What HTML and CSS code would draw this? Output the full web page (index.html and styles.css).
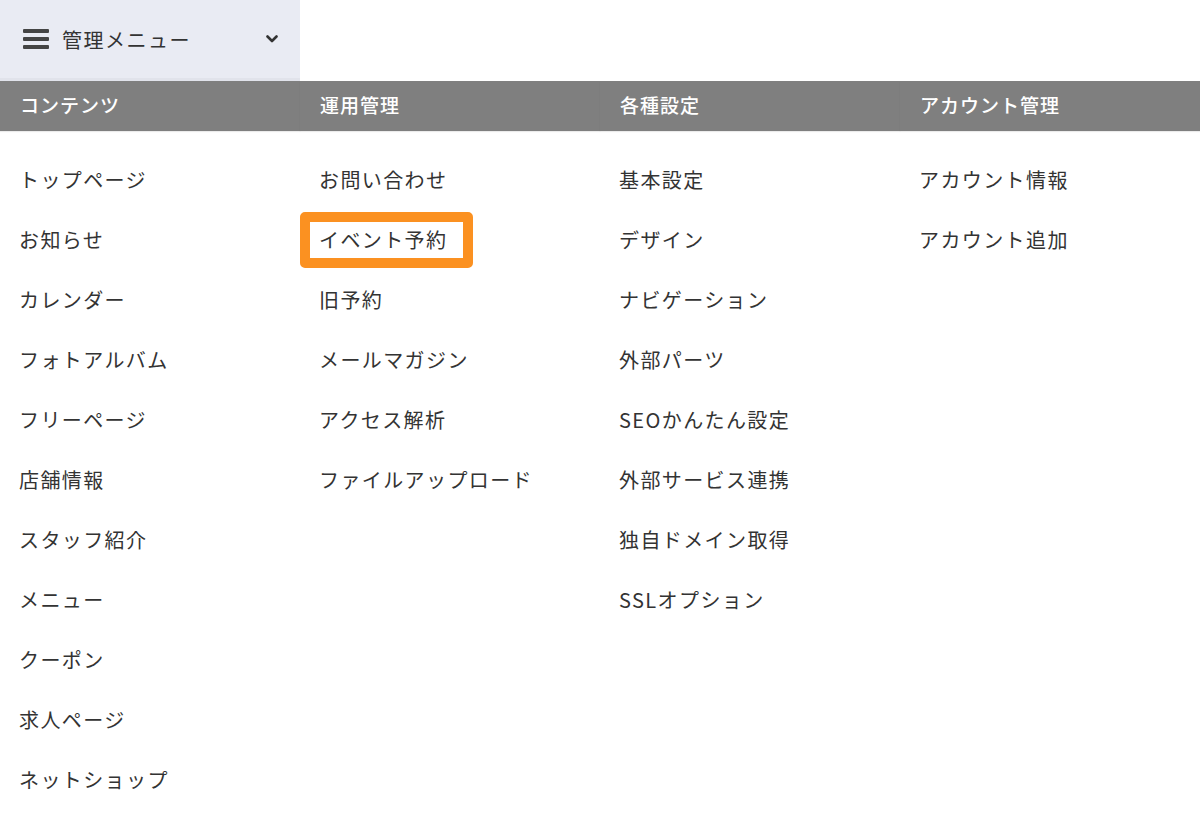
FILE: index.html
```html
<!DOCTYPE html>
<html lang="ja">
<head>
<meta charset="utf-8">
<title>管理メニュー</title>
<link rel="stylesheet" href="styles.css">
</head>
<body>
<div class="tab">
  <svg class="burger" width="26" height="22" viewBox="0 0 26 22"><rect x="0" y="1" width="26" height="4" rx="1" fill="#444"/><rect x="0" y="9" width="26" height="4" rx="1" fill="#444"/><rect x="0" y="17" width="26" height="4" rx="1" fill="#444"/></svg>
  <span class="tab-label">管理メニュー</span>
  <svg class="chev" width="12" height="8" viewBox="0 0 12 8"><path d="M1.5 1.5 L6 6 L10.5 1.5" fill="none" stroke="#333" stroke-width="2.6" stroke-linecap="round" stroke-linejoin="round"/></svg>
</div>
<div class="panel">
  <div class="col">
    <div class="head">コンテンツ</div>
    <ul class="list">
      <li>トップページ</li>
      <li>お知らせ</li>
      <li>カレンダー</li>
      <li>フォトアルバム</li>
      <li>フリーページ</li>
      <li>店舗情報</li>
      <li>スタッフ紹介</li>
      <li>メニュー</li>
      <li>クーポン</li>
      <li>求人ページ</li>
      <li>ネットショップ</li>
    </ul>
  </div>
  <div class="col">
    <div class="head">運用管理</div>
    <ul class="list">
      <li>お問い合わせ</li>
      <li class="hl">イベント予約</li>
      <li>旧予約</li>
      <li>メールマガジン</li>
      <li>アクセス解析</li>
      <li>ファイルアップロード</li>
    </ul>
  </div>
  <div class="col">
    <div class="head">各種設定</div>
    <ul class="list">
      <li>基本設定</li>
      <li>デザイン</li>
      <li>ナビゲーション</li>
      <li>外部パーツ</li>
      <li>SEOかんたん設定</li>
      <li>外部サービス連携</li>
      <li>独自ドメイン取得</li>
      <li>SSLオプション</li>
    </ul>
  </div>
  <div class="col">
    <div class="head">アカウント管理</div>
    <ul class="list">
      <li>アカウント情報</li>
      <li>アカウント追加</li>
    </ul>
  </div>
</div>
</body>
</html>
```

FILE: styles.css
```css
html, body {
  margin: 0;
  padding: 0;
  background: #fff;
  font-family: "Noto Sans CJK JP", "Noto Sans", "Liberation Sans", sans-serif;
  color: #333;
}
.tab {
  width: 300px;
  height: 81px;
  background: #e9ebf3;
  display: flex;
  align-items: center;
  padding: 0 22px 0 23px;
  box-sizing: border-box;
  border-bottom: 3px solid #e1e3eb;
}
.burger {
  flex: none;
  margin-right: 13px;
}
.tab-label {
  font-size: 20px;
  letter-spacing: 1.5px;
  color: #333;
  flex: 1;
}
.chev {
  flex: none;
}
.panel {
  display: grid;
  grid-template-columns: repeat(4, 300px);
}
.head {
  height: 50px;
  background: #7f7f7f;
  color: #fff;
  font-size: 19px;
  font-weight: 500;
  letter-spacing: 1px;
  display: flex;
  align-items: center;
  padding-left: 20px;
  padding-bottom: 3px;
  box-sizing: border-box;
  box-shadow: 0 1px 1px rgba(0,0,0,0.08);
}
.list {
  list-style: none;
  margin: 0;
  padding: 19px 0 0 0;
}
.list li {
  height: 60px;
  line-height: 60px;
  padding-left: 19px;
  font-size: 20px;
  letter-spacing: 1.4px;
  color: #333;
  position: relative;
}
.list li.hl::before {
  content: "";
  position: absolute;
  left: 0;
  top: 2px;
  width: 173px;
  height: 56px;
  box-sizing: border-box;
  border: 10px solid #fb9121;
  border-radius: 5px;
}
```
